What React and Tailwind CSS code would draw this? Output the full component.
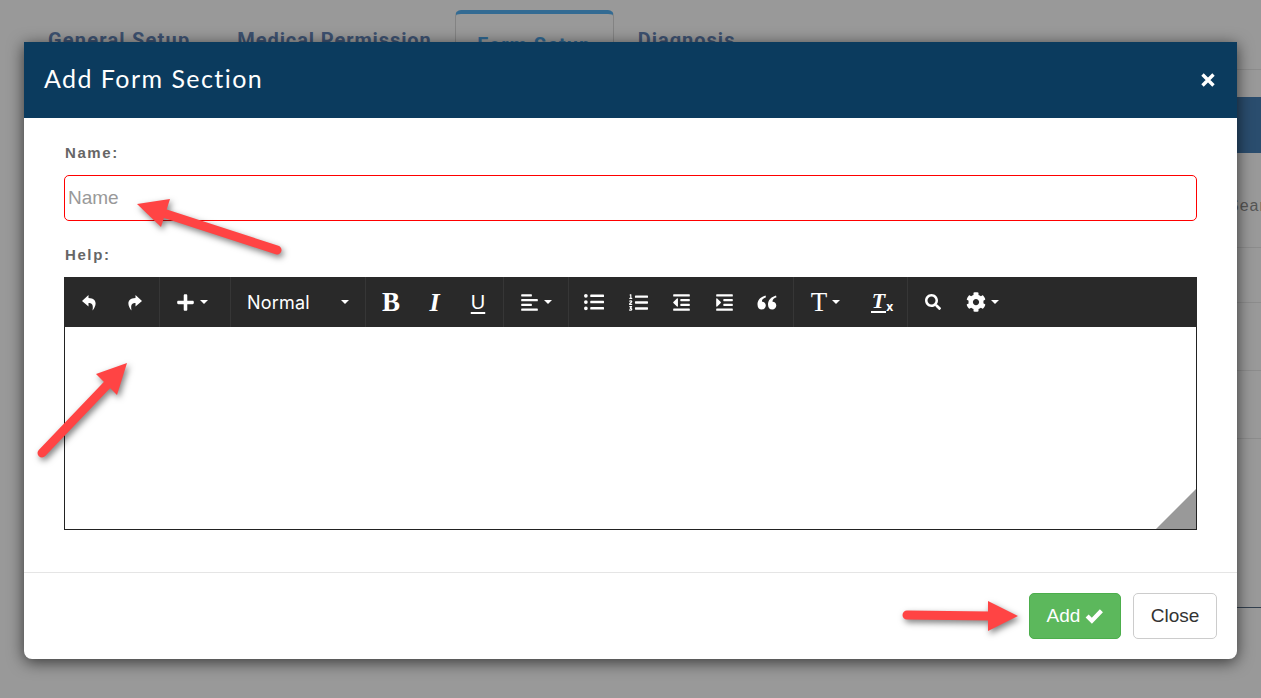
import { FaPlus, FaAlignLeft, FaListUl, FaListOl, FaOutdent, FaIndent, FaSearch, FaCog } from 'react-icons/fa';

function Caret() {
  return <span className="ml-[5px] h-0 w-0 border-x-[4px] border-t-[4px] border-x-transparent border-t-white" />;
}

function ToolButton({ className = '', children }) {
  return (
    <div className={`flex h-full items-center justify-center text-white ${className}`}>
      {children}
    </div>
  );
}

function Group({ children }) {
  return <div className="flex h-full items-center border-r border-[#363636]">{children}</div>;
}

function ReplyIcon({ className = '' }) {
  return (
    <svg viewBox="0 0 15 17" width="15" height="17" fill="white" className={className}>
      <path d="M6.5 1 L0 7 L6.5 12.5 V9 C10 9 11.5 10.5 10.5 16.5 C14.5 12 16 4.5 6.5 4 Z" />
    </svg>
  );
}

function QuoteIcon() {
  return (
    <svg viewBox="0 0 20 15" width="20" height="15" fill="white">
      <path d="M8.5 0.5 C3.5 2 0.5 5 0.5 9.5 C0.5 12.5 2 14.5 4.8 14.5 C7 14.5 8.8 12.8 8.8 10.5 C8.8 8.2 7.2 6.8 5 6.8 C4.7 4.8 6.4 3 9 2.2 Z" />
      <path d="M19 0.5 C14 2 11 5 11 9.5 C11 12.5 12.5 14.5 15.3 14.5 C17.5 14.5 19.3 12.8 19.3 10.5 C19.3 8.2 17.7 6.8 15.5 6.8 C15.2 4.8 16.9 3 19.5 2.2 Z" />
    </svg>
  );
}

function Toolbar() {
  return (
    <div className="flex h-[50px] items-center bg-[#292929] text-white">
      <Group>
        <ToolButton className="w-[51px]"><ReplyIcon /></ToolButton>
        <ToolButton className="w-[44px] pr-[6px]"><ReplyIcon className="-scale-x-100" /></ToolButton>
      </Group>
      <Group>
        <ToolButton className="w-[70px] pr-[7px]"><FaPlus className="text-[19px]" /><Caret /></ToolButton>
      </Group>
      <Group>
        <div className="flex w-[134px] items-center justify-between pr-[16px] pl-[16px] font-['Inter',sans-serif] text-[18px] tracking-[0.2px]">
          <span>Normal</span>
          <Caret />
        </div>
      </Group>
      <Group>
        <ToolButton className="w-[50px] font-['Liberation_Serif',serif] text-[27px] font-bold">B</ToolButton>
        <ToolButton className="w-[37px] font-['Liberation_Serif',serif] text-[26px] font-bold italic">I</ToolButton>
        <ToolButton className="w-[50px] font-['Liberation_Sans',sans-serif] text-[20px] underline underline-offset-[3px]">U</ToolButton>
      </Group>
      <Group>
        <ToolButton className="w-[64px]"><FaAlignLeft className="text-[19px]" /><Caret /></ToolButton>
      </Group>
      <ToolButton className="w-[50px]"><FaListUl className="text-[20px]" /></ToolButton>
      <ToolButton className="w-[38px]"><FaListOl className="text-[19px]" /></ToolButton>
      <ToolButton className="w-[48px]"><FaOutdent className="text-[19px]" /></ToolButton>
      <ToolButton className="w-[39px]"><FaIndent className="text-[19px]" /></ToolButton>
      <Group>
        <ToolButton className="w-[49px] pr-[4px]"><QuoteIcon /></ToolButton>
      </Group>
      <Group>
        <ToolButton className="w-[63px] font-['Liberation_Serif',serif] text-[27px]"><span>T</span><Caret /></ToolButton>
        <ToolButton className="w-[50px]">
          <span className="border-b-2 border-white px-[1px] font-['Liberation_Serif',serif] text-[22px] leading-[20px] font-bold italic">T</span>
          <span className="mt-[10px] text-[12px] leading-none font-bold">x</span>
        </ToolButton>
      </Group>
      <ToolButton className="w-[49px]"><FaSearch className="text-[16px]" /></ToolButton>
      <ToolButton className="w-[46px] pl-[4px]"><FaCog className="text-[20px]" /><Caret /></ToolButton>
    </div>
  );
}

function PageBehind() {
  return (
    <div className="ml-[24px] flex flex-col">
      <div className="flex h-[70px] items-end border-b border-[#8c8c8c] pl-[24px] font-['Roboto',sans-serif] text-[20px] font-bold whitespace-nowrap text-[#3d5170]">
        <span className="mb-[14px] tracking-[1.2px]">General Setup</span>
        <span className="mb-[14px] ml-[47px] tracking-[0.9px]">Medical Permission</span>
        <span className="ml-[23px] flex h-[59px] w-[159px] shrink-0 items-start justify-center rounded-t-md border-x border-t-4 border-x-[#838383] border-t-[#336b93] pt-[16px] tracking-[1px] text-[#2f6690]">
          Form Setup
        </span>
        <span className="mb-[14px] ml-[24px] tracking-[1px]">Diagnosis</span>
      </div>
      <div className="mt-[27px] h-[56px] bg-[#2a4d6e]" />
      <div className="h-[95px] border-b border-[#8c8c8c] pt-[41px] pl-[1204px] font-['Liberation_Sans',sans-serif] text-[16px] tracking-[1px] whitespace-nowrap text-[#555]">
        Search
      </div>
      <div className="h-[55px] border-b border-[#8c8c8c]" />
      <div className="h-[68px] border-b border-[#8c8c8c]" />
      <div className="h-[68px] border-b border-[#8c8c8c]" />
      <div className="h-[169px] border-b border-[#33404f]" />
    </div>
  );
}

function Arrows() {
  return (
    <svg className="pointer-events-none absolute inset-0 drop-shadow-[2px_3px_3px_rgba(0,0,0,0.5)]" width="1261" height="698">
      <g fill="#ff4444" stroke="#ff4444" strokeLinecap="round">
        <line x1="277" y1="250" x2="160" y2="212" strokeWidth="9" />
        <polygon points="137,204 170,199 161,227" strokeWidth="0" />
        <line x1="42" y1="453" x2="108" y2="384" strokeWidth="9" />
        <polygon points="127,363 96,374 117,395" strokeWidth="0" />
        <line x1="907" y1="615" x2="990" y2="616" strokeWidth="9" />
        <polygon points="1018,616 988,601 988,631" strokeWidth="0" />
      </g>
    </svg>
  );
}

export default function App() {
  return (
    <div className="relative h-[698px] w-[1261px] overflow-hidden bg-[#999]">
      <PageBehind />

      <div className="absolute top-[42px] left-[24px] flex h-[617px] w-[1213px] flex-col rounded-b-lg bg-white shadow-[0_3px_16px_rgba(0,0,0,0.65)]">
        <div className="flex h-[76px] shrink-0 items-center justify-between bg-[#0b3b5e] pr-[22px] pb-[2px] pl-[20px] text-white">
          <h4 className="font-['Lato',sans-serif] text-[25px] tracking-[1.45px]">Add Form Section</h4>
          <svg viewBox="0 0 14 14" width="14" height="14" className="mt-[2px]" stroke="white" strokeWidth="3.4">
            <path d="M1.5 1.5 L12.5 12.5 M12.5 1.5 L1.5 12.5" />
          </svg>
        </div>

        <div className="flex-1 px-[40px] pt-[27px]">
          <label className="block pl-[1px] font-['Liberation_Sans',sans-serif] text-[15px] leading-[16px] font-bold tracking-[1.6px] text-[#666]">Name:</label>
          <input
            placeholder="Name"
            className="mt-[14px] block h-[46px] w-full rounded-[5px] border border-[#f00] px-[3px] font-['Liberation_Sans',sans-serif] text-[19px] outline-none placeholder:text-[#999]"
          />
          <label className="mt-[26px] block pl-[1px] font-['Liberation_Sans',sans-serif] text-[15px] leading-[16px] font-bold tracking-[1.6px] text-[#666]">Help:</label>
          <div className="mt-[14px]">
            <Toolbar />
            <div className="relative h-[203px] border-x border-b border-[#222] bg-white">
              <div className="absolute right-0 bottom-0 h-0 w-0 border-b-[40px] border-l-[40px] border-b-[#999] border-l-transparent" />
            </div>
          </div>
        </div>

        <div className="flex h-[87px] shrink-0 items-start justify-end gap-[12px] border-t border-[#e5e5e5] pt-[20px] pr-[20px] font-['Liberation_Sans',sans-serif] text-[19px]">
          <button className="flex h-[46px] w-[92px] items-center justify-center gap-[5px] rounded-[5px] border border-[#4cae4c] bg-[#5cb85c] text-white">
            Add
            <svg viewBox="0 0 17 15" width="18" height="16" fill="none" stroke="white" strokeWidth="4">
              <path d="M2 7.5 L6.5 12 L15.5 2.5" />
            </svg>
          </button>
          <button className="h-[46px] w-[84px] rounded-[5px] border border-[#ccc] bg-white text-[#333]">Close</button>
        </div>
      </div>

      <Arrows />
    </div>
  );
}
